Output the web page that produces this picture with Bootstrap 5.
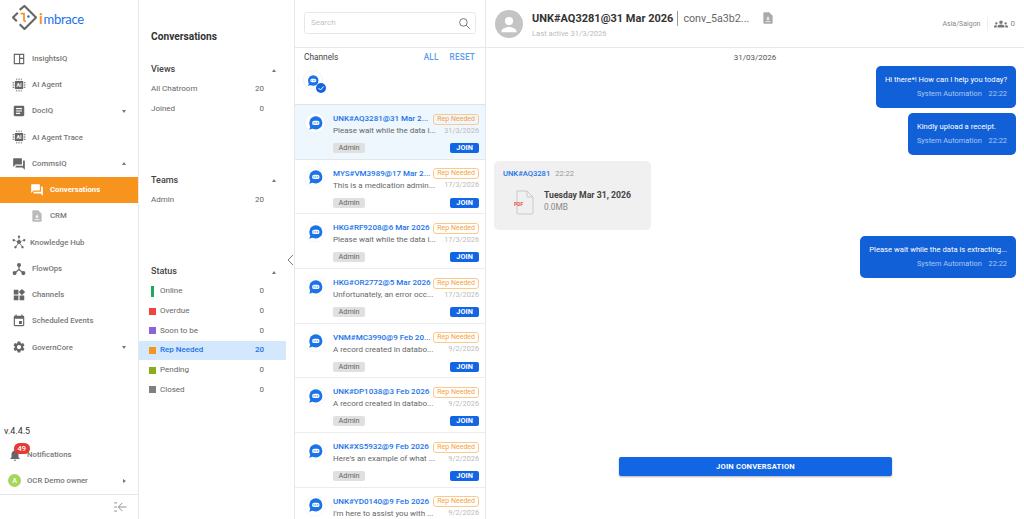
<!DOCTYPE html>
<html lang="en">
<head>
  <meta charset="UTF-8" />
  <meta name="viewport" content="width=device-width, initial-scale=1.0">
  <title>Conversations | imbrace</title>
  <link href="https://cdn.jsdelivr.net/npm/bootstrap@5.3.3/dist/css/bootstrap.min.css" rel="stylesheet">
  <style>
    html, body { height: 100%; overflow: hidden; }
    body { font-family: Roboto, "Liberation Sans", sans-serif; color: #333; background: #fff; }
    .app-shell { height: 519px; }

    /* main sidebar */
    .side-main { width: 139px; border-right: 1px solid #e8e8e8; flex: none; }
    .brand-row { height: 45.5px; padding: 5px 0 0 12px; }
    .brand-name { font-family: Lato, sans-serif; font-size: 13px; font-weight: 400; color: #1a73e8; margin-left: 2px; line-height: 26px; letter-spacing: -.3px; }
    .brand-name b { color: #f7941d; font-weight: 700; font-size: 15px; margin-right: 1px; }
    .side-link { height: 26.25px; font-size: 7.75px; font-weight: 500; color: #777; padding-left: 12px; padding-right: 12px; }
    .side-link svg { width: 14px; height: 14px; fill: #666; flex: none; margin-right: 6px; }
    .side-link.tight svg { margin-right: 4px; }
    .side-link.sub { padding-left: 30px; }
    .side-link.on { background: #f7941d; color: #fff; font-weight: 700; }
    .side-link.on svg { fill: #fff; }
    .side-link.sub:not(.on) svg { fill: #bbb; }
    .side-link.foot-row { padding-left: 8px; }
    .caret-dn, .caret-up { width: 0; height: 0; border-left: 2.5px solid transparent; border-right: 2.5px solid transparent; margin-left: auto; }
    .caret-dn { border-top: 3px solid #777; }
    .caret-up { border-bottom: 3px solid #777; }
    .caret-rt { width: 0; height: 0; border-top: 2.5px solid transparent; border-bottom: 2.5px solid transparent; border-left: 3px solid #777; margin-left: auto; }
    .version-txt { font-size: 9px; color: #333; padding-left: 4px; height: 14px; line-height: 14px; }
    .bell-wrap svg { margin-right: 5px; }
    .notif-count { position: absolute; left: 6px; top: -5px; background: #e53935; color: #fff; font-size: 7.5px; font-weight: 500; border-radius: 6px; padding: 1px 3.5px; line-height: 9px; }
    .user-dot { width: 13px; height: 13px; border-radius: 50%; background: #a5d75a; color: #fff; font-size: 7px; margin-right: 6px; flex: none; }
    .side-foot { border-top: 1px solid #e8e8e8; height: 25px; padding-right: 11px; }
    .side-foot svg { width: 14px; height: 14px; stroke: #666; fill: none; stroke-width: 1.2; }

    /* filter pane */
    .side-filter { width: 156px; border-right: 1px solid #e8e8e8; flex: none; padding-top: 30px; }
    .pane-title { font-size: 10.2px; font-weight: 700; color: #333; padding-left: 12px; height: 14px; line-height: 14px; }
    .group-head { font-size: 9px; font-weight: 500; color: #444; height: 14px; padding: 0 18px 0 12px; }
    .group-head + .filter-row { margin-top: 2.5px; }
    .filter-row { height: 19.7px; font-size: 8px; color: #666; padding: 0 22px 0 12px; width: 147px; }
    .filter-row .cnt { margin-left: auto; color: #666; }
    .filter-row.sel { background: #d3e7fd; color: #1a73e8; font-weight: 500; }
    .filter-row.sel .cnt { color: #1a73e8; }
    .status-sq { width: 7px; height: 7px; margin: 0 4px 0 -2px; flex: none; }
    .status-bar { width: 3px; height: 11px; background: #1fa85a; margin: 0 6px 0 0; flex: none; }
    .collapse-chev { position: absolute; left: 287px; top: 255px; width: 7px; height: 10px; stroke: #777; fill: none; stroke-width: 1; }
    .title-gap { height: 19px; }
    .view-gap { height: 55px; }
    .team-gap { height: 55px; }

    /* conversation list */
    .list-pane { width: 191px; border-right: 1px solid #e8e8e8; flex: none; overflow: hidden; }
    .search-row { height: 48px; border-bottom: 1px solid #e8e8e8; padding: 12px 9px; }
    .search-box { height: 22px; border: 1px solid #e8e8e8; border-radius: 3px; padding: 0 4px 0 6px; font-size: 8px; color: #c4c4c4; }
    .search-box svg { width: 13px; height: 13px; stroke: #666; fill: none; stroke-width: 1.6; margin-left: auto; }
    .chan-row { height: 57px; border-bottom: 1px solid #e2e2e2; padding: 3px 10px 0 9px; position: relative; }
    .chan-head { font-size: 8.3px; color: #444; height: 13px; }
    .chan-link { color: #5a9bf0; font-weight: 500; font-size: 8.2px; letter-spacing: .2px; margin-left: 11px; }
    .chan-ic { position: relative; width: 22px; height: 22px; margin-top: 8px; }
    .chan-ic::before { content: ""; position: absolute; left: -1px; top: -2px; width: 20px; height: 20px; border-radius: 50%; border: 1px solid #f2f2f2; }
    .chat-dot { width: 12px; height: 12px; left: 3px; top: 3px; }
    .chk-dot { position: absolute; right: 0; bottom: 1px; width: 10px; height: 10px; }
    .conv-item { height: 54.7px; border-bottom: 1px solid #ececec; padding: 8px 6px 0 10px; }
    .conv-item.cur { background: #eef6fe; border-bottom-color: #e6e6e6; }
    .conv-icon { width: 20px; height: 20px; border-radius: 50%; background: #fff; box-shadow: 0 0 1px #ddd; margin: 0 8px 0 0; flex: none; }
    .conv-icon svg { width: 15px; height: 15px; }
    .conv-body { min-width: 0; flex: 1; }
    .conv-title { font-size: 8px; font-weight: 500; color: #1a73e8; white-space: nowrap; line-height: 12px; }
    .conv-tag { margin-left: auto; border: 1px solid #fbc98c; border-radius: 3px; color: #f7a13c; font-size: 7px; line-height: 9px; padding: 0 3px; white-space: nowrap; height: 11px; }
    .conv-text { font-size: 8px; color: #666; white-space: nowrap; line-height: 12px; }
    .conv-date { margin-left: auto; font-size: 7.3px; color: #bbb; }
    .conv-foot { margin-top: 6px; }
    .team-chip { background: #e0e0e0; color: #666; font-size: 7.3px; border-radius: 2px; padding: 0 5.5px; line-height: 10px; height: 10px; }
    .join-mini { margin-left: auto; background: #1266e3; color: #fff; font-size: 7.3px; font-weight: 700; border-radius: 2px; padding: 0 6px; line-height: 10px; height: 10px; border: 0; letter-spacing: .1px; }

    /* chat pane */
    .chat-pane { min-width: 0; }
    .chat-head { height: 48px; border-bottom: 1px solid #e8e8e8; padding: 0 9px 0 9px; flex: none; }
    .head-avatar { width: 28px; height: 28px; border-radius: 50%; background: #c4c4c4; margin-right: 9px; flex: none; overflow: hidden; }
    .head-avatar svg { width: 28px; height: 28px; fill: #fff; }
    .head-text { padding-top: 2px; }
    .head-title { font-size: 11px; font-weight: 700; color: #333; line-height: 15px; }
    .head-conv { font-size: 10.7px; color: #666; border-left: 1px solid #999; margin-left: 4px; padding-left: 5px; line-height: 15px; }
    .head-sub { font-size: 7.6px; color: #bbb; line-height: 11px; margin-top: 2px; }
    .head-file { width: 14px; height: 14px; fill: #aaa; margin-left: 12px; }
    .head-zone { font-size: 7px; color: #888; padding-right: 6px; border-right: 1px solid #eee; line-height: 14px; }
    .head-people { font-size: 8px; color: #888; padding-left: 6px; }
    .head-people svg { width: 14px; height: 14px; fill: #777; margin-right: 3px; }
    .chat-day { font-size: 8px; color: #555; text-align: center; line-height: 12px; padding-top: 4px; margin-bottom: 2px; }
    .chat-scroll { padding: 0 8px; }
    .bubble-out { background: #1260d8; color: #fff; border-radius: 5px; padding: 8px 9px; font-size: 7.65px; line-height: 12px; margin-bottom: 5px; }
    .bubble-meta { color: #a9c6f5; margin-top: 2px; text-align: right; white-space: nowrap; font-size: 7.4px; }
    .bubble-meta span { margin-left: 5px; }
    .bubble-file { background: #f0f0f0; border-radius: 5px; width: 157px; height: 69px; padding: 7px 9px; margin: 1px 0 6px; }
    .file-top { line-height: 12px; font-size: 7.6px; }
    .file-who { font-weight: 500; color: #1a73e8; }
    .file-time { color: #999; margin-left: 5px; }
    .file-line { margin-top: 10px; }
    .file-pdf { width: 22px; height: 25px; margin: 0 8px 0 11px; flex: none; }
    .file-meta { margin-top: -3px; }
    .file-name { font-size: 8.7px; font-weight: 700; color: #444; line-height: 12px; }
    .file-size { font-size: 8.3px; color: #888; line-height: 12px; }
    .join-wide { width: 273px; height: 19px; background: #1266e3; color: #fff; font-size: 7.6px; font-weight: 700; border: 0; border-radius: 2px; padding: 0; letter-spacing: .2px; box-shadow: 0 1px 2px rgba(0,0,0,.3); }
    .join-wide:hover { background: #1266e3; color: #fff; }
    .join-row { padding-bottom: 43px; padding-left: 1px; }
  </style>
</head>
<body>
<svg width="0" height="0" class="d-block position-absolute">
  <defs>
    <symbol id="i-panel" viewBox="0 0 24 24"><path d="M3 3h18v18H3zM5 5v14h7V5zm9 0v5h5V5zm0 7v7h5v-7z" fill-rule="evenodd"/></symbol>
    <symbol id="i-chip" viewBox="0 0 24 24"><path d="M5 5h14v14H5zM7 1h1v3H7zm3 0h1v3h-1zm3 0h1v3h-1zm3 0h1v3h-1zM7 20h1v3H7zm3 0h1v3h-1zm3 0h1v3h-1zm3 0h1v3h-1zM1 7h3v1H1zm0 3h3v1H1zm0 3h3v1H1zm0 3h3v1H1zm19-9h3v1h-3zm0 3h3v1h-3zm0 3h3v1h-3zm0 3h3v1h-3z"/><text x="12" y="15.5" text-anchor="middle" font-size="9" font-weight="700" fill="#fff" font-family="Roboto">AI</text></symbol>
    <symbol id="i-article" viewBox="0 0 24 24"><path d="M19 3H5c-1.1 0-2 .9-2 2v14c0 1.1.9 2 2 2h14c1.100 0 2-.9 2-2V5c0-1.100-.9-2-2-2zm-5 14H7v-2h7v2zm3-4H7v-2h10v2zm0-4H7V7h10v2z"/></symbol>
    <symbol id="i-forum" viewBox="0 0 24 24"><path d="M21 6h-2v9H6v2c0 .55.45 1 1 1h11l4 4V7c0-.55-.45-1-1-1zm-4 6V3c0-.55-.45-1-1-1H3c-.55 0-1 .45-1 1v14l4-4h10c.55 0 1-.45 1-1z"/></symbol>
    <symbol id="i-file" viewBox="0 0 24 24"><path d="M14 2H6c-1.100 0-2 .9-2 2v16c0 1.100.9 2 2 2h12c1.100 0 2-.9 2-2V8l-6-6zM8 17h8v1.500H8zm4-1l-3-3h2v-3h2v3h2z" fill-rule="evenodd"/></symbol>
    <symbol id="i-hub" viewBox="0 0 24 24"><circle cx="12" cy="12" r="3.500"/><circle cx="3" cy="9" r="2"/><circle cx="21" cy="9" r="2"/><circle cx="12" cy="3" r="2"/><circle cx="6" cy="21" r="2"/><circle cx="18" cy="21" r="2"/><path d="M3 8.500l9 3 9-3v1l-8.500 3 6 8-1 .5-5.500-7.500-5.500 7.500-1-.5 6-8L3 9.500zM11.500 3h1v9h-1z"/></symbol>
    <symbol id="i-flow" viewBox="0 0 24 24"><circle cx="12" cy="5" r="3.500"/><circle cx="4.500" cy="19" r="3.500"/><circle cx="19.500" cy="19" r="3.500"/><path d="M11 7h2v5l5.500 5-1.500 1.500-5-4.500-5 4.500L5.500 17l5.500-5z"/></symbol>
    <symbol id="i-widgets" viewBox="0 0 24 24"><path d="M3 3h8v8H3zm0 10h8v8H3zm10 0h8v8h-8zm4-11.500L22.500 7 17 12.500 11.500 7z"/></symbol>
    <symbol id="i-event" viewBox="0 0 24 24"><path d="M17 12h-5v5h5v-5zM16 1v2H8V1H6v2H5c-1.110 0-1.990.9-1.990 2L3 19c0 1.100.89 2 2 2h14c1.100 0 2-.9 2-2V5c0-1.100-.9-2-2-2h-1V1h-2zm3 18H5V8h14v11z"/></symbol>
    <symbol id="i-gear" viewBox="0 0 24 24"><path d="M19.140 12.940c.04-.3.06-.61.06-.94 0-.32-.02-.64-.07-.94l2.030-1.580c.18-.14.23-.41.12-.61l-1.920-3.320c-.12-.22-.37-.29-.59-.22l-2.390.96c-.5-.38-1.030-.7-1.620-.94l-.36-2.540c-.04-.24-.24-.41-.48-.41h-3.840c-.24 0-.43.17-.47.41l-.36 2.540c-.59.24-1.130.57-1.620.94l-2.390-.96c-.22-.08-.47 0-.59.22L2.740 8.870c-.12.21-.08.47.12.61l2.030 1.580c-.05.3-.09.63-.09.94s.02.64.07.94l-2.030 1.580c-.18.14-.23.41-.12.61l1.920 3.320c.12.22.37.29.59.22l2.390-.96c.5.38 1.030.7 1.620.94l.36 2.540c.05.24.24.41.48.41h3.840c.24 0 .44-.17.47-.41l.36-2.540c.59-.24 1.130-.56 1.620-.94l2.390.96c.22.08.47 0 .59-.22l1.920-3.320c.12-.22.07-.47-.12-.61l-2.010-1.580zM12 15.600c-1.980 0-3.600-1.620-3.600-3.600s1.620-3.600 3.600-3.600 3.600 1.620 3.600 3.600-1.620 3.600-3.600 3.600z"/></symbol>
    <symbol id="i-bell" viewBox="0 0 24 24"><path d="M12 22c1.100 0 2-.9 2-2h-4c0 1.100.89 2 2 2zm6-6v-5c0-3.070-1.640-5.640-4.500-6.320V4c0-.83-.67-1.500-1.500-1.500s-1.500.67-1.500 1.500v.68C7.630 5.360 6 7.920 6 11v5l-2 2v1h16v-1l-2-2z"/></symbol>
    <symbol id="i-bubble" viewBox="0 0 24 24"><circle cx="12.500" cy="11" r="10.500" fill="#1a73e8"/><path d="M4 16l-2 6 7-2.500z" fill="#1a73e8"/><rect x="6.500" y="7.500" width="12" height="7" rx="3.500" fill="#fff"/><circle cx="9.500" cy="11" r=".9" fill="#1a73e8"/><circle cx="12.500" cy="11" r=".9" fill="#1a73e8"/><circle cx="15.500" cy="11" r=".9" fill="#1a73e8"/></symbol>
    <symbol id="i-groups" viewBox="0 0 24 24"><path d="M12 12.750c1.630 0 3.070.39 4.240.9 1.080.48 1.760 1.560 1.760 2.730V18H6v-1.610c0-1.180.68-2.260 1.760-2.730 1.170-.52 2.610-.91 4.240-.91zM4 13c1.100 0 2-.9 2-2s-.9-2-2-2-2 .9-2 2 .9 2 2 2zm1.130 1.100C4.760 14.040 4.390 14 4 14c-.99 0-1.930.21-2.780.58C.48 14.900 0 15.620 0 16.430V18h4.500v-1.610c0-.83.23-1.610.63-2.290zM20 13c1.100 0 2-.9 2-2s-.9-2-2-2-2 .9-2 2 .9 2 2 2zm4 3.430c0-.81-.48-1.530-1.220-1.850C21.930 14.210 20.990 14 20 14c-.39 0-.76.04-1.130.1.4.68.63 1.460.63 2.290V18H24v-1.570zM12 6c1.660 0 3 1.340 3 3s-1.340 3-3 3-3-1.340-3-3 1.340-3 3-3z"/></symbol>
  </defs>
</svg>

<div class="app-shell d-flex">
  <!-- main nav -->
  <aside class="side-main d-flex flex-column">
    <div class="brand-row d-flex align-items-start">
      <svg width="25" height="25" viewBox="0 0 26 26">
        <path d="M8 5L13 1l12 12-12 12-5-5M6 8L1 13l4 4" fill="none" stroke="#666" stroke-width="2.200"/>
        <path d="M9 9h3.500v7c0 1 1 1 2 1" fill="none" stroke="#f7941d" stroke-width="1.800"/>
        <circle cx="17" cy="12" r="1.300" fill="#1a73e8"/>
      </svg>
      <span class="brand-name"><b>i</b>mbrace</span>
    </div>
    <div class="side-link d-flex align-items-center"><svg><use href="#i-panel"/></svg>InsightsIQ</div>
    <div class="side-link d-flex align-items-center"><svg><use href="#i-chip"/></svg>AI Agent</div>
    <div class="side-link d-flex align-items-center"><svg><use href="#i-article"/></svg>DocIQ<i class="caret-dn"></i></div>
    <div class="side-link d-flex align-items-center"><svg><use href="#i-chip"/></svg>AI Agent Trace</div>
    <div class="side-link d-flex align-items-center"><svg><use href="#i-forum"/></svg>CommsIQ<i class="caret-up"></i></div>
    <div class="side-link sub on d-flex align-items-center"><svg><use href="#i-forum"/></svg>Conversations</div>
    <div class="side-link sub d-flex align-items-center"><svg><use href="#i-file"/></svg>CRM</div>
    <div class="side-link tight d-flex align-items-center"><svg><use href="#i-hub"/></svg>Knowledge Hub</div>
    <div class="side-link d-flex align-items-center"><svg><use href="#i-flow"/></svg>FlowOps</div>
    <div class="side-link d-flex align-items-center"><svg><use href="#i-widgets"/></svg>Channels</div>
    <div class="side-link d-flex align-items-center"><svg><use href="#i-event"/></svg>Scheduled Events</div>
    <div class="side-link d-flex align-items-center"><svg><use href="#i-gear"/></svg>GovernCore<i class="caret-dn"></i></div>
    <div class="mt-auto">
      <div class="version-txt">v.4.4.5</div>
      <div class="side-link foot-row d-flex align-items-center mt-1">
        <span class="bell-wrap position-relative d-inline-flex"><svg><use href="#i-bell"/></svg><span class="notif-count">49</span></span>Notifications
      </div>
      <div class="side-link foot-row d-flex align-items-center"><span class="user-dot d-flex align-items-center justify-content-center">A</span>OCR Demo owner<i class="caret-rt"></i></div>
      <div class="side-foot d-flex align-items-center justify-content-end">
        <svg viewBox="0 0 24 24"><path d="M2 5h5M2 12h5M2 19h5M23 12H10M16 5l-7 7 7 7"/></svg>
      </div>
    </div>
  </aside>

  <!-- filters -->
  <aside class="side-filter">
    <div class="pane-title">Conversations</div>
    <div class="title-gap"></div>
    <div class="group-head d-flex align-items-center">Views<i class="caret-up"></i></div>
    <div class="filter-row d-flex align-items-center">All Chatroom<span class="cnt">20</span></div>
    <div class="filter-row d-flex align-items-center">Joined<span class="cnt">0</span></div>
    <div class="view-gap"></div>
    <div class="group-head d-flex align-items-center">Teams<i class="caret-up"></i></div>
    <div class="filter-row d-flex align-items-center">Admin<span class="cnt">20</span></div>
    <div class="team-gap"></div>
    <div class="group-head d-flex align-items-center">Status<i class="caret-up"></i></div>
    <div class="filter-row d-flex align-items-center"><span class="status-bar"></span>Online<span class="cnt">0</span></div>
    <div class="filter-row d-flex align-items-center"><span class="status-sq" style="background:#ef4444"></span>Overdue<span class="cnt">0</span></div>
    <div class="filter-row d-flex align-items-center"><span class="status-sq" style="background:#8e63d6"></span>Soon to be<span class="cnt">0</span></div>
    <div class="filter-row sel d-flex align-items-center"><span class="status-sq" style="background:#f7941d"></span>Rep Needed<span class="cnt">20</span></div>
    <div class="filter-row d-flex align-items-center"><span class="status-sq" style="background:#8eaa1f"></span>Pending<span class="cnt">0</span></div>
    <div class="filter-row d-flex align-items-center"><span class="status-sq" style="background:#808080"></span>Closed<span class="cnt">0</span></div>
  </aside>
  <svg class="collapse-chev" viewBox="0 0 7 10"><path d="M6 0L1 5l5 5"/></svg>

  <!-- conversation list -->
  <section class="list-pane">
    <div class="search-row">
      <div class="search-box d-flex align-items-center">Search
        <svg viewBox="0 0 24 24"><circle cx="10" cy="10" r="7"/><path d="M15 15l7 7"/></svg>
      </div>
    </div>
    <div class="chan-row">
      <div class="chan-head d-flex align-items-center">Channels<span class="chan-link ms-auto">ALL</span><span class="chan-link">RESET</span></div>
      <div class="chan-ic">
        <svg class="chat-dot position-absolute"><use href="#i-bubble"/></svg>
        <svg class="chk-dot" viewBox="0 0 10 10"><circle cx="5" cy="5" r="5" fill="#1266e3"/><path d="M2.500 5l2 2 3-3.500" stroke="#fff" fill="none"/></svg>
      </div>
    </div>

    <div class="conv-item cur d-flex">
      <div class="conv-icon d-flex align-items-center justify-content-center"><svg><use href="#i-bubble"/></svg></div>
      <div class="conv-body">
        <div class="d-flex align-items-center"><div class="conv-title">UNK#AQ3281@31 Mar 2...</div><span class="conv-tag">Rep Needed</span></div>
        <div class="d-flex align-items-center"><div class="conv-text">Please wait while the data i...</div><span class="conv-date">31/3/2026</span></div>
        <div class="conv-foot d-flex align-items-center"><span class="team-chip">Admin</span><button class="join-mini">JOIN</button></div>
      </div>
    </div>
    <div class="conv-item d-flex">
      <div class="conv-icon d-flex align-items-center justify-content-center"><svg><use href="#i-bubble"/></svg></div>
      <div class="conv-body">
        <div class="d-flex align-items-center"><div class="conv-title">MYS#VM3989@17 Mar 2...</div><span class="conv-tag">Rep Needed</span></div>
        <div class="d-flex align-items-center"><div class="conv-text">This is a medication admin...</div><span class="conv-date">17/3/2026</span></div>
        <div class="conv-foot d-flex align-items-center"><span class="team-chip">Admin</span><button class="join-mini">JOIN</button></div>
      </div>
    </div>
    <div class="conv-item d-flex">
      <div class="conv-icon d-flex align-items-center justify-content-center"><svg><use href="#i-bubble"/></svg></div>
      <div class="conv-body">
        <div class="d-flex align-items-center"><div class="conv-title">HKG#RF9208@6 Mar 2026</div><span class="conv-tag">Rep Needed</span></div>
        <div class="d-flex align-items-center"><div class="conv-text">Please wait while the data i...</div><span class="conv-date">17/3/2026</span></div>
        <div class="conv-foot d-flex align-items-center"><span class="team-chip">Admin</span><button class="join-mini">JOIN</button></div>
      </div>
    </div>
    <div class="conv-item d-flex">
      <div class="conv-icon d-flex align-items-center justify-content-center"><svg><use href="#i-bubble"/></svg></div>
      <div class="conv-body">
        <div class="d-flex align-items-center"><div class="conv-title">HKG#OR2772@5 Mar 2026</div><span class="conv-tag">Rep Needed</span></div>
        <div class="d-flex align-items-center"><div class="conv-text">Unfortunately, an error occ...</div><span class="conv-date">17/3/2026</span></div>
        <div class="conv-foot d-flex align-items-center"><span class="team-chip">Admin</span><button class="join-mini">JOIN</button></div>
      </div>
    </div>
    <div class="conv-item d-flex">
      <div class="conv-icon d-flex align-items-center justify-content-center"><svg><use href="#i-bubble"/></svg></div>
      <div class="conv-body">
        <div class="d-flex align-items-center"><div class="conv-title">VNM#MC3990@9 Feb 20...</div><span class="conv-tag">Rep Needed</span></div>
        <div class="d-flex align-items-center"><div class="conv-text">A record created in databo...</div><span class="conv-date">9/2/2026</span></div>
        <div class="conv-foot d-flex align-items-center"><span class="team-chip">Admin</span><button class="join-mini">JOIN</button></div>
      </div>
    </div>
    <div class="conv-item d-flex">
      <div class="conv-icon d-flex align-items-center justify-content-center"><svg><use href="#i-bubble"/></svg></div>
      <div class="conv-body">
        <div class="d-flex align-items-center"><div class="conv-title">UNK#DP1038@3 Feb 2026</div><span class="conv-tag">Rep Needed</span></div>
        <div class="d-flex align-items-center"><div class="conv-text">A record created in databo...</div><span class="conv-date">9/2/2026</span></div>
        <div class="conv-foot d-flex align-items-center"><span class="team-chip">Admin</span><button class="join-mini">JOIN</button></div>
      </div>
    </div>
    <div class="conv-item d-flex">
      <div class="conv-icon d-flex align-items-center justify-content-center"><svg><use href="#i-bubble"/></svg></div>
      <div class="conv-body">
        <div class="d-flex align-items-center"><div class="conv-title">UNK#XS5932@9 Feb 2026</div><span class="conv-tag">Rep Needed</span></div>
        <div class="d-flex align-items-center"><div class="conv-text">Here's an example of what ...</div><span class="conv-date">9/2/2026</span></div>
        <div class="conv-foot d-flex align-items-center"><span class="team-chip">Admin</span><button class="join-mini">JOIN</button></div>
      </div>
    </div>
    <div class="conv-item d-flex">
      <div class="conv-icon d-flex align-items-center justify-content-center"><svg><use href="#i-bubble"/></svg></div>
      <div class="conv-body">
        <div class="d-flex align-items-center"><div class="conv-title">UNK#YD0140@9 Feb 2026</div><span class="conv-tag">Rep Needed</span></div>
        <div class="d-flex align-items-center"><div class="conv-text">I'm here to assist you with ...</div><span class="conv-date">9/2/2026</span></div>
      </div>
    </div>
  </section>

  <!-- chat -->
  <main class="chat-pane flex-grow-1 d-flex flex-column">
    <header class="chat-head d-flex align-items-center">
      <div class="head-avatar"><svg viewBox="0 0 24 24"><circle cx="12" cy="9.500" r="3.500"/><path d="M5.500 18.500c0-2.700 4.300-4 6.500-4s6.500 1.300 6.500 4v.5h-13z"/></svg></div>
      <div class="head-text">
        <div class="d-flex align-items-center"><span class="head-title">UNK#AQ3281@31 Mar 2026</span><span class="head-conv">conv_5a3b2...</span><svg class="head-file"><use href="#i-file"/></svg></div>
        <div class="head-sub">Last active 31/3/2026</div>
      </div>
      <div class="ms-auto d-flex align-items-center">
        <span class="head-zone">Asia/Saigon</span>
        <span class="head-people d-flex align-items-center"><svg><use href="#i-groups"/></svg>0</span>
      </div>
    </header>
    <div class="chat-scroll flex-grow-1 d-flex flex-column">
      <div class="chat-day">31/03/2026</div>
      <div class="bubble-out align-self-end">Hi there*! How can I help you today?
        <div class="bubble-meta">System Automation <span>22:22</span></div></div>
      <div class="bubble-out align-self-end">Kindly upload a receipt.
        <div class="bubble-meta">System Automation <span>22:22</span></div></div>
      <div class="bubble-file align-self-start">
        <div class="file-top"><span class="file-who">UNK#AQ3281</span><span class="file-time">22:22</span></div>
        <div class="file-line d-flex align-items-center">
          <svg class="file-pdf" viewBox="0 0 22 25"><path d="M3 1h10l6 6v16a1 1 0 01-1 1H4a1 1 0 01-1-1z" fill="none" stroke="#c9c9c9"/><path d="M13 1v6h6" fill="none" stroke="#c9c9c9"/><text x="0" y="16" font-size="5" font-weight="700" fill="#e8574a" font-family="Roboto">PDF</text></svg>
          <div class="file-meta"><div class="file-name">Tuesday Mar 31, 2026</div><div class="file-size">0.0MB</div></div>
        </div>
      </div>
      <div class="bubble-out align-self-end">Please wait while the data is extracting...
        <div class="bubble-meta">System Automation <span>22:22</span></div></div>
      <div class="join-row mt-auto d-flex justify-content-center">
        <button class="btn join-wide">JOIN CONVERSATION</button>
      </div>
    </div>
  </main>
</div>

<script src="https://cdn.jsdelivr.net/npm/bootstrap@5.3.3/dist/js/bootstrap.bundle.min.js"></script>
</body>
</html>
